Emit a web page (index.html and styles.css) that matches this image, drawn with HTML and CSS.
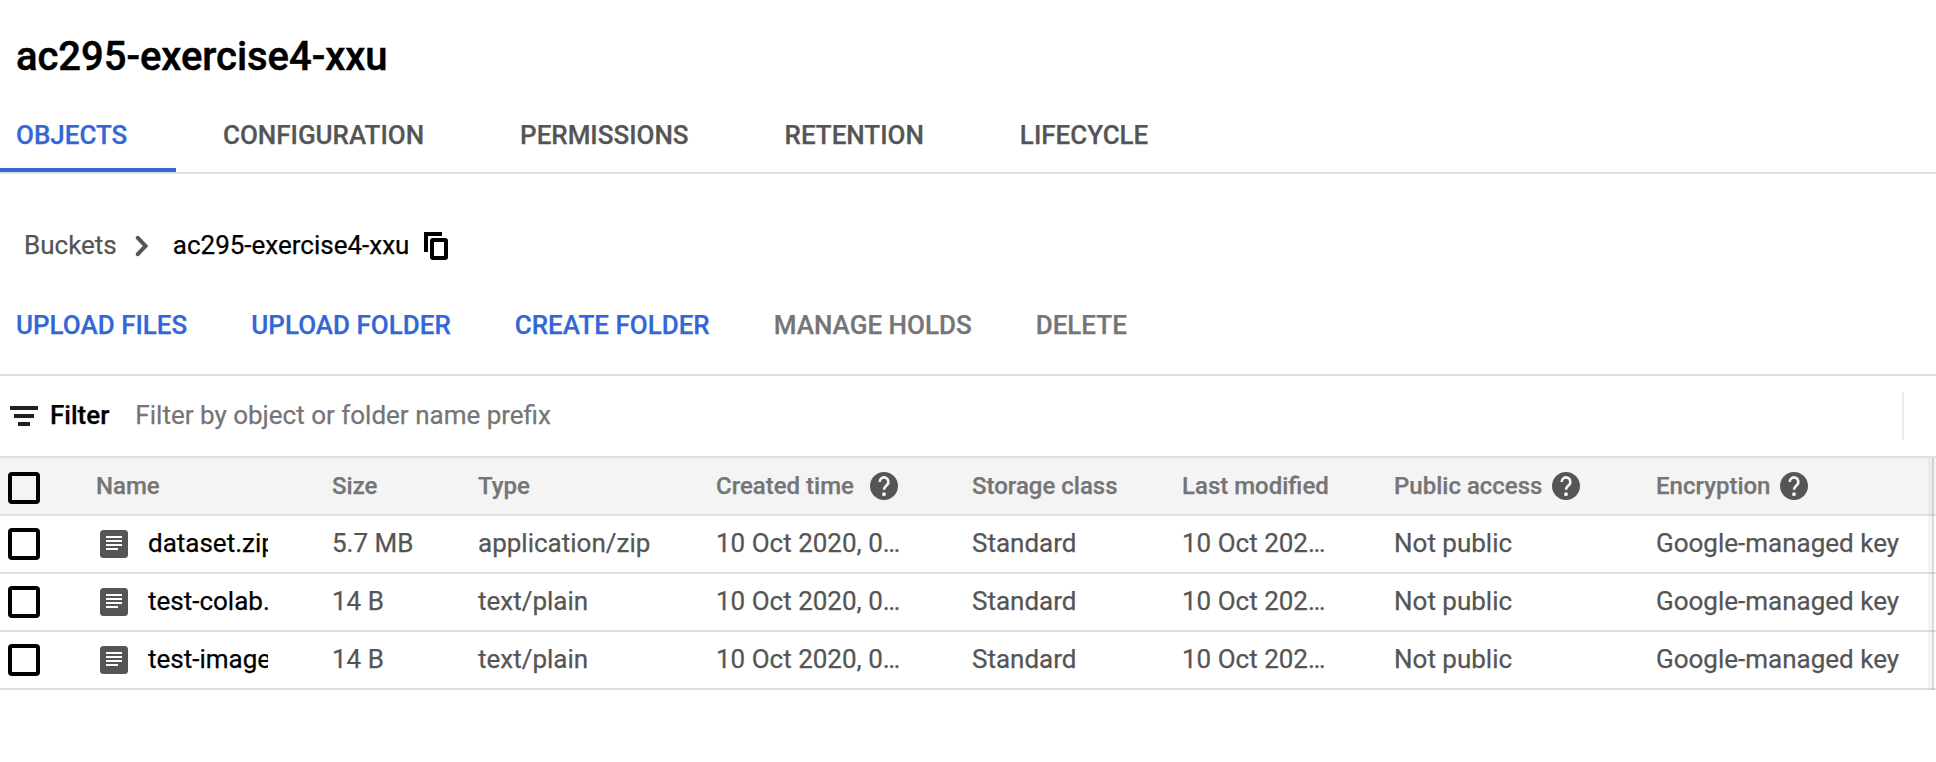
FILE: index.html
```html
<!DOCTYPE html>
<html lang="en">
<head>
<meta charset="utf-8">
<title>ac295-exercise4-xxu</title>
<link rel="stylesheet" href="styles.css">
</head>
<body>
<svg class="defs" width="0" height="0">
  <symbol id="help" viewBox="2 2 20 20"><path d="M12 2C6.48 2 2 6.48 2 12s4.480 10 10 10 10-4.480 10-10S17.520 2 12 2z"/><path d="M8.900 9.100a3.100 3.100 0 1 1 5.300 2.100c-1.100 1.100-2.200 1.600-2.200 3.500" fill="none" stroke="#f4f4f4" stroke-width="1.900"/><circle cx="12" cy="17.900" r="1.400" fill="#f4f4f4"/></symbol>
  <symbol id="doc" viewBox="0 0 28 28"><rect width="28" height="28" rx="3.500" fill="#555"/><path fill="#fff" d="M6 6h16v2H6zM6 10h16v2H6zM6 14h16v2H6zM6 18h12v2H6z"/></symbol>
</svg>
<h1 class="title">ac295-exercise4-xxu</h1>
<nav class="tabs">
  <a class="tab active">OBJECTS</a>
  <a class="tab">CONFIGURATION</a>
  <a class="tab">PERMISSIONS</a>
  <a class="tab">RETENTION</a>
  <a class="tab">LIFECYCLE</a>
</nav>
<div class="crumbs">
  <span class="crumb">Buckets</span>
  <svg class="chevron" width="14" height="22" viewBox="0 0 14 22"><path d="M2.800 2.800L10.500 11l-7.700 8.200" fill="none" stroke="#555" stroke-width="4" stroke-linecap="round"/></svg>
  <span class="current">ac295-exercise4-xxu</span>
  <svg class="copy" width="24" height="28" viewBox="0 0 24 28"><path d="M2 20V2H18" fill="none" stroke="#000" stroke-width="4"/><rect x="8" y="8" width="14" height="18" rx="1" fill="none" stroke="#000" stroke-width="4"/></svg>
</div>
<div class="actions">
  <button class="action">UPLOAD FILES</button>
  <button class="action">UPLOAD FOLDER</button>
  <button class="action">CREATE FOLDER</button>
  <button class="action disabled">MANAGE HOLDS</button>
  <button class="action disabled">DELETE</button>
</div>
<div class="filter">
  <svg width="28" height="20" viewBox="0 0 28 20"><path d="M0 0h28v4H0zM4 8h20v4H4zM8 16h12v4H8z" fill="#212121"/></svg>
  <span class="filter-label">Filter</span>
  <span class="placeholder">Filter by object or folder name prefix</span>
  <span class="divider"></span>
</div>
<div class="table">
  <div class="row head">
    <span class="check"></span>
    <span>Name</span>
    <span>Size</span>
    <span>Type</span>
    <span class="with-help wide">Created time<svg class="help"><use href="#help"/></svg></span>
    <span>Storage class</span>
    <span>Last modified</span>
    <span class="with-help">Public access<svg class="help"><use href="#help"/></svg></span>
    <span class="with-help">Encryption<svg class="help"><use href="#help"/></svg></span>
  </div>
  <div class="row">
    <span class="check"></span>
    <span class="name"><svg class="doc"><use href="#doc"/></svg><b class="file">dataset.zip</b></span>
    <span>5.7 MB</span>
    <span>application/zip</span>
    <span>10 Oct 2020, 0…</span>
    <span>Standard</span>
    <span>10 Oct 202…</span>
    <span>Not public</span>
    <span>Google-managed key</span>
  </div>
  <div class="row">
    <span class="check"></span>
    <span class="name"><svg class="doc"><use href="#doc"/></svg><b class="file">test-colab.</b></span>
    <span>14 B</span>
    <span>text/plain</span>
    <span>10 Oct 2020, 0…</span>
    <span>Standard</span>
    <span>10 Oct 202…</span>
    <span>Not public</span>
    <span>Google-managed key</span>
  </div>
  <div class="row">
    <span class="check"></span>
    <span class="name"><svg class="doc"><use href="#doc"/></svg><b class="file">test-image</b></span>
    <span>14 B</span>
    <span>text/plain</span>
    <span>10 Oct 2020, 0…</span>
    <span>Standard</span>
    <span>10 Oct 202…</span>
    <span>Not public</span>
    <span>Google-managed key</span>
  </div>
  <div class="scroll-edge"></div>
</div>
</body>
</html>
```
FILE: styles.css
```css
* { box-sizing: border-box; }
body { margin: 0; height: 762px; overflow: hidden; background: #fff; color: #000; font: 26px Roboto, sans-serif; white-space: nowrap; -webkit-text-stroke: 0.25px; }
.defs { display: block; }
svg { flex: none; }
.title { height: 112px; margin: 0; padding-left: 16px; font-size: 40px; font-weight: 500; line-height: 114px; letter-spacing: -0.05px; -webkit-text-stroke: 0.5px; }
.tabs { display: flex; height: 62px; border-bottom: 2px solid #e0e0e0; font-weight: 500; color: #555; }
.tab { padding: 0 48px 10px; line-height: 46px; border-bottom: 4px solid transparent; letter-spacing: -0.02px; }
.tab.active { width: 176px; margin-right: -1px; padding-left: 16px; color: #3367d6; border-color: #3367d6; }
.crumbs { display: flex; align-items: center; height: 142px; padding-left: 24px; line-height: 142px; }
.crumb { color: #555; }
.chevron { margin: 2px 24px 0 18px; }
.copy { margin: 2px 0 0 15px; }
.actions { display: flex; gap: 64px; height: 60px; padding: 0 16px 42px; border-bottom: 2px solid #e0e0e0; }
.action { padding: 0; border: 0; background: none; color: #3367d6; font: 500 26px/18px Roboto, sans-serif; -webkit-text-stroke: 0.25px; }
.action.disabled { color: #757575; }
.filter { display: flex; align-items: center; height: 80px; padding-left: 10px; }
.filter-label { margin: 0 26px 0 12px; padding-bottom: 2px; font-weight: 500; }
.placeholder { padding-bottom: 2px; color: #757575; }
.divider { width: 2px; height: 48px; margin-left: auto; margin-right: 32px; background: #ebebeb; }
.table { position: relative; border-top: 2px solid #e0e0e0; }
.row { display: grid; grid-template-columns: 96px 236px 146px 238px 256px 210px 212px 262px 1fr; align-items: center; height: 58px; border-bottom: 2px solid #e0e0e0; line-height: 54px; color: #555; }
.row > span:not(.check):not(.name) { padding-bottom: 2px; }
.row.head { background: #f4f4f4; color: #757575; font-size: 24px; font-weight: 500; line-height: 56px; }
.row.head > span:not(.check) { padding-bottom: 0; }
.check { width: 32px; height: 32px; margin-left: 8px; border: 4px solid #000; border-radius: 4px; }
.head .check { margin-top: 4px; }
.name { display: flex; align-items: center; padding-left: 4px; }
.doc { width: 28px; height: 28px; }
.file { width: 120px; margin-left: 20px; padding-bottom: 2px; overflow: hidden; color: #000; font-weight: 400; }
.with-help { display: flex; align-items: center; gap: 10px; }
.with-help.wide { gap: 16px; }
.help { width: 28px; height: 28px; fill: #555; }
.scroll-edge { position: absolute; top: 0; right: 2px; bottom: 0; width: 6px; background: rgba(0,0,0,.04); border-right: 2px solid rgba(0,0,0,.1); }
```
